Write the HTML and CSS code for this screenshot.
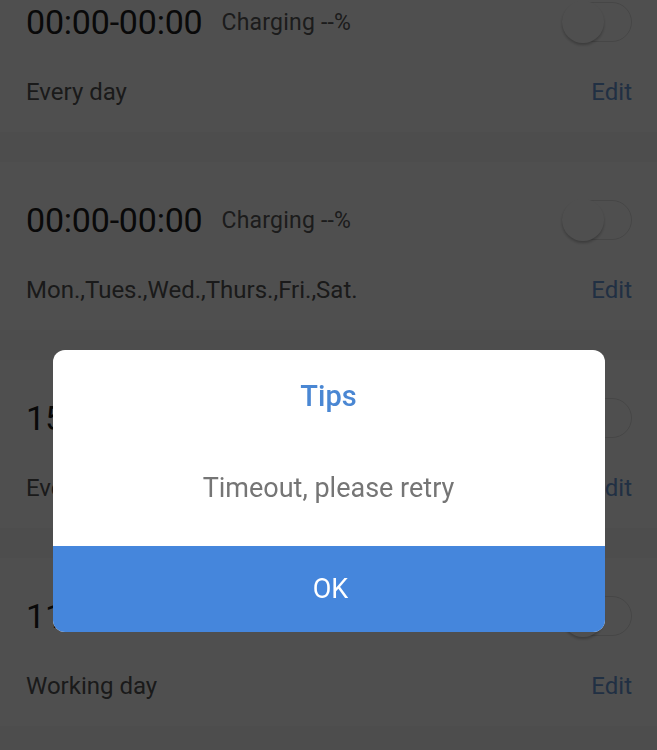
FILE: index.html
```html
<!DOCTYPE html>
<html lang="en">
<head>
  <meta charset="utf-8">
  <meta name="viewport" content="width=device-width, initial-scale=1">
  <title>Charging schedule</title>
  <link rel="stylesheet" href="styles.css">
</head>
<body>
  <div class="list">
    <div class="card first">
      <div class="row-top">
        <span class="time">00:00-00:00</span>
        <span class="level">Charging --%</span>
        <span class="toggle"><span class="knob"></span></span>
      </div>
      <div class="row-bottom">
        <span class="days">Every day</span>
        <span class="edit">Edit</span>
      </div>
    </div>
    <div class="card">
      <div class="row-top">
        <span class="time">00:00-00:00</span>
        <span class="level">Charging --%</span>
        <span class="toggle"><span class="knob"></span></span>
      </div>
      <div class="row-bottom">
        <span class="days">Mon.,Tues.,Wed.,Thurs.,Fri.,Sat.</span>
        <span class="edit">Edit</span>
      </div>
    </div>
    <div class="card">
      <div class="row-top">
        <span class="time">15:00-17:00</span>
        <span class="level">Charging --%</span>
        <span class="toggle"><span class="knob"></span></span>
      </div>
      <div class="row-bottom">
        <span class="days">Every day</span>
        <span class="edit">Edit</span>
      </div>
    </div>
    <div class="card">
      <div class="row-top">
        <span class="time">11:00-13:00</span>
        <span class="level">Charging --%</span>
        <span class="toggle"><span class="knob"></span></span>
      </div>
      <div class="row-bottom">
        <span class="days">Working day</span>
        <span class="edit">Edit</span>
      </div>
    </div>
  </div>

  <!-- dialogo de aviso -->
  <div class="mask">
    <div class="dialog">
      <div class="dialog-body">
        <div class="dialog-title">Tips</div>
        <div class="dialog-msg">Timeout, please retry</div>
      </div>
      <div class="dialog-btn">OK</div>
    </div>
  </div>
</body>
</html>
```

FILE: styles.css
```css
body {
  margin: 0;
  padding: 0;
  height: 100vh;
  overflow: hidden;
  background: #f9f9f9;
  font-family: Roboto, "Noto Sans", sans-serif;
}

.list {
  display: flex;
  flex-direction: column;
  gap: 30px;
  margin-top: -36px;
}

.card {
  background: #fff;
  height: 168px;
  box-sizing: border-box;
  padding: 36px 26px 0 26px;
}

.row-top {
  display: flex;
  align-items: center;
  height: 44px;
}

.time {
  font-size: 34px;
  color: #1e1e1e;
  letter-spacing: -0.2px;
}

.level {
  font-size: 23px;
  color: #5a5a5a;
  margin-left: 19px;
  letter-spacing: 0.2px;
}

.toggle {
  margin-left: auto;
  margin-right: -1px;
  width: 70px;
  height: 40px;
  border: 1px solid #e0e0e0;
  border-radius: 21px;
  display: flex;
  align-items: center;
  box-sizing: border-box;
}

.knob {
  width: 42px;
  height: 42px;
  border-radius: 50%;
  background: #fff;
  margin-left: -1px;
  box-shadow: 0 2px 3px rgba(0, 0, 0, 0.25);
}

.row-bottom {
  display: flex;
  align-items: center;
  justify-content: space-between;
  height: 30px;
  margin-top: 33px;
}

.days {
  font-size: 24px;
  color: #555;
}

.edit {
  font-size: 24px;
  color: #6a9ad8;
  margin-right: -1px;
}

.mask {
  position: fixed;
  top: 0;
  left: 0;
  right: 0;
  bottom: 0;
  background: rgba(0, 0, 0, 0.69);
  display: flex;
  justify-content: center;
  align-items: flex-start;
}

.dialog {
  margin-top: 350px;
  width: 552px;
  border-radius: 12px;
  overflow: hidden;
  background: #fff;
}

.dialog-body {
  height: 196px;
  box-sizing: border-box;
  padding-top: 28px;
  text-align: center;
}

.dialog-title {
  font-size: 29px;
  font-weight: 500;
  color: #4a87d3;
  line-height: 36px;
}

.dialog-msg {
  margin-top: 56px;
  font-size: 27px;
  color: #757575;
  line-height: 36px;
}

.dialog-btn {
  height: 86px;
  background: #4586dc;
  color: #fff;
  font-size: 27px;
  padding-left: 4px;
  display: flex;
  align-items: center;
  justify-content: center;
}
```
